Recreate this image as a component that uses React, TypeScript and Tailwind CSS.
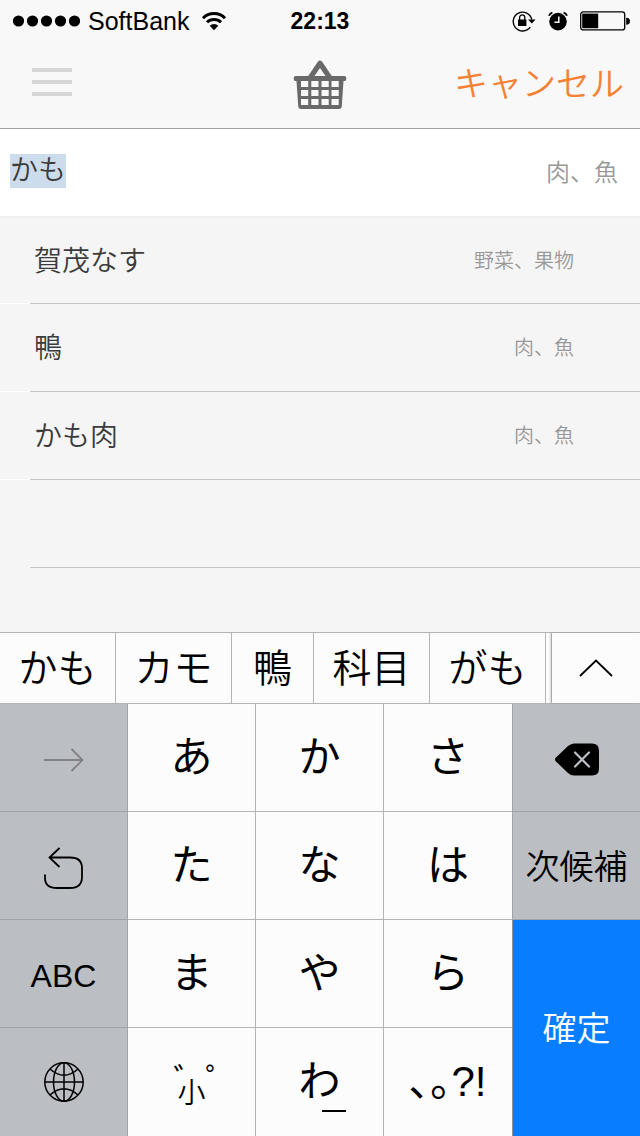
import React, { useEffect, useRef, useState } from 'react';

interface Suggestion {
    name: string;
    category: string;
}

const suggestions: Suggestion[] = [
    { name: '賀茂なす', category: '野菜、果物' },
    { name: '鴨', category: '肉、魚' },
    { name: 'かも肉', category: '肉、魚' },
];

const candidates = ['かも', 'カモ', '鴨', '科目', 'がも'];

function StatusBar() {
    return (
        <div className="relative flex h-10 items-center justify-between pl-3 pr-2.5 pt-0.5 text-black">
            <div className="flex items-center">
                <svg width="68" height="12" viewBox="0 0 68 12" aria-hidden="true">
                    {[6.5, 20.5, 34.5, 48.5, 62.5].map((cx) => (
                        <circle key={cx} cx={cx} cy="6" r="5.6" />
                    ))}
                </svg>
                <span className="ml-2 text-[25px] leading-none">SoftBank</span>
                <svg className="ml-3" width="26" height="20" viewBox="0 0 26 20" fill="none" stroke="#000" strokeWidth="3" aria-hidden="true">
                    <path d="M2 7.2A15.5 15.5 0 0 1 24 7.2" />
                    <path d="M6 11.3A10 10 0 0 1 20 11.3" />
                    <path d="M13 19.2L8.7 14.8A6.2 6.2 0 0 1 17.3 14.8Z" fill="#000" stroke="none" />
                </svg>
            </div>
            <span className="absolute inset-x-0 text-center text-[23px] font-bold leading-none">22:13</span>
            <div className="flex items-center">
                <svg width="24" height="22" viewBox="0 0 24 22" fill="none" aria-hidden="true">
                    <path d="M18.2 17.2A9.4 9.4 0 1 1 19.8 9.5" stroke="#000" strokeWidth="1.4" />
                    <path d="M16 9.6H23.6L19.8 13.6Z" fill="#000" />
                    <rect x="6" y="9.5" width="8.4" height="6.5" fill="#000" />
                    <path d="M7.6 10V7.6A2.6 2.8 0 0 1 12.8 7.6V10" stroke="#000" strokeWidth="1.3" />
                </svg>
                <svg className="ml-3" width="20" height="20" viewBox="0 0 20 20" fill="none" aria-hidden="true">
                    <circle cx="10" cy="10.6" r="8.8" fill="#000" />
                    <path d="M1 4.8A5 5 0 0 1 4.4 1.6M19 4.8A5 5 0 0 0 15.6 1.6" stroke="#000" strokeWidth="1.8" />
                    <path d="M10.8 5.4V11.2H6.4" stroke="#f8f8f8" strokeWidth="1.5" />
                </svg>
                <svg className="ml-3" width="50" height="20" viewBox="0 0 50 20" fill="none" aria-hidden="true">
                    <rect x="0.7" y="0.9" width="44" height="18" rx="2.5" stroke="#000" strokeWidth="1.3" />
                    <rect x="2.2" y="2.6" width="16" height="14.6" fill="#000" />
                    <path d="M46.5 7A3.2 3.2 0 0 1 46.5 13.4Z" fill="#000" stroke="#000" strokeWidth="0.6" />
                </svg>
            </div>
        </div>
    );
}

function BasketIcon() {
    return (
        <svg width="53" height="49" viewBox="0 0 53 49" aria-hidden="true">
            <path d="M16.5 18L26.5 3.2L36.5 18" fill="none" stroke="#696969" strokeWidth="5.2" strokeLinejoin="round" />
            <path d="M2 16H51Q53 16 53 18.5T51 21H50L48.3 46Q48 49 45.5 49H7.5Q5 49 4.7 46L3 21H2Q0 21 0 18.5T2 16Z" fill="#696969" />
            <g fill="#f8f8f8">
                {[21, 30, 39].map((y) =>
                    [7.5, 17.8, 28, 38].map((x) => <rect key={`${x}-${y}`} x={x} y={y} width="7.2" height="6" />)
                )}
            </g>
        </svg>
    );
}

function Header() {
    return (
        <header className="border-b border-[#a0a0a0] bg-[#f8f8f8]">
            <StatusBar />
            <div className="relative flex h-22 items-center justify-between pl-8 pr-4">
                <button type="button" aria-label="メニュー" className="flex flex-col gap-2 pb-1">
                    <span className="h-1 w-10 bg-[#d6d6d6]" />
                    <span className="h-1 w-10 bg-[#d6d6d6]" />
                    <span className="h-1 w-10 bg-[#d6d6d6]" />
                </button>
                <div className="absolute left-1/2 -translate-x-1/2">
                    <BasketIcon />
                </div>
                <button type="button" className="text-[34px] text-[#f58233]">
                    キャンセル
                </button>
            </div>
        </header>
    );
}

function SuggestionList() {
    return (
        <ul className="flex-1">
            {suggestions.map((item) => (
                <li key={item.name} className="h-22 border-b border-b-white pl-[30px] first:border-t-2 first:border-t-[#efefef]">
                    <div className="-mb-px flex h-[calc(100%+1px)] items-center justify-between border-b border-[#c7c7c7] pl-1 pr-[66px]">
                        <span className="pt-0.5 text-[28px] text-[#3c3c3c]">{item.name}</span>
                        <span className="text-[20px] text-[#999]">{item.category}</span>
                    </div>
                </li>
            ))}
            <li className="ml-[30px] h-22 border-b border-[#c7c7c7]" />
        </ul>
    );
}

function CandidateBar({ onPick }: { onPick: (word: string) => void }) {
    return (
        <div className="flex h-18 border-y border-[#b2b4b8] bg-[#fcfcfc]">
            <div className="flex flex-1 overflow-hidden">
                {candidates.map((word) => (
                    <button
                        key={word}
                        type="button"
                        onClick={() => onPick(word)}
                        className={`shrink-0 border-r border-[#b2b4b8] text-[39px] leading-none ${word.length > 1 ? 'w-[116px]' : 'w-[82px]'}`}
                    >
                        {word}
                    </button>
                ))}
            </div>
            <button
                type="button"
                aria-label="候補を広げる"
                className="flex w-[89px] items-center justify-center border-l border-[#a8a8a8] shadow-[-1px_0_2px_rgba(0,0,0,0.15)]"
            >
                <svg width="34" height="18" viewBox="0 0 34 18" fill="none" stroke="#000" strokeWidth="1.8" aria-hidden="true">
                    <path d="M1 17L17 1.5L33 17" />
                </svg>
            </button>
        </div>
    );
}

const whiteKey = 'flex items-center justify-center border-b border-r border-[#b2b4b8] bg-[#fcfcfc] text-[42px] font-normal leading-none';
const grayKey = 'flex items-center justify-center border-b border-r border-[#a0a3a8] bg-[#bbbec3] pt-1 text-[32px] leading-none';

function Keyboard() {
    return (
        <div className="grid auto-rows-[108px] grid-cols-5 text-black">
            <button type="button" aria-label="次へ" className={grayKey}>
                <svg width="40" height="24" viewBox="0 0 40 24" fill="none" stroke="#808285" strokeWidth="1.8" aria-hidden="true">
                    <path d="M0 12H38.5M27.5 1L38.5 12L27.5 23" />
                </svg>
            </button>
            <button type="button" className={whiteKey}>あ</button>
            <button type="button" className={whiteKey}>か</button>
            <button type="button" className={`${whiteKey} border-r-0`}>さ</button>
            <button type="button" aria-label="削除" className={`${grayKey} border-l border-r-0`}>
                <svg width="44" height="33" viewBox="0 0 44 33" aria-hidden="true">
                    <path d="M1 14.5L13 3Q16 0.5 19 0.5H37Q44 0.5 44 7.5V25.5Q44 32.5 37 32.5H19Q16 32.5 13 30L1 18.5Q-1 16.5 1 14.5Z" />
                    <path d="M20 9.5L34 23.5M34 9.5L20 23.5" stroke="#bbbec3" strokeWidth="2.2" strokeLinecap="round" />
                </svg>
            </button>

            <button type="button" aria-label="戻す" className={grayKey}>
                <svg width="40" height="42" viewBox="0 0 40 42" fill="none" stroke="#000" strokeWidth="1.8" aria-hidden="true">
                    <path d="M15.5 1L5.5 10.5L15.5 20M5.5 10.5H26Q38 10.5 38 21V30Q38 41 26 41H13Q1 41 1 31V27.5" />
                </svg>
            </button>
            <button type="button" className={whiteKey}>た</button>
            <button type="button" className={whiteKey}>な</button>
            <button type="button" className={`${whiteKey} border-r-0`}>は</button>
            <button type="button" className="flex items-center justify-center whitespace-nowrap border-b border-l border-[#a0a3a8] bg-[#bbbec3] pt-0.5 text-[34px] leading-none">
                次候補
            </button>

            <button type="button" className={grayKey}>ABC</button>
            <button type="button" className={whiteKey}>ま</button>
            <button type="button" className={whiteKey}>や</button>
            <button type="button" className={`${whiteKey} border-r-0`}>ら</button>
            <button type="button" className="row-span-2 flex items-center justify-center border-l border-[#8a9099] bg-[#087dff] pt-0.5 text-[34px] leading-none text-white">
                確定
            </button>

            <button type="button" aria-label="キーボード切替" className="flex items-center justify-center border-r border-[#a0a3a8] bg-[#bbbec3]">
                <svg width="40" height="40" viewBox="0 0 40 40" fill="none" stroke="#000" strokeWidth="1.5" aria-hidden="true">
                    <circle cx="20" cy="20" r="19.2" />
                    <ellipse cx="20" cy="20" rx="10.5" ry="19.2" />
                    <path d="M20 0.8V39.2M0.8 20H39.2M6 7Q20 19.5 34 7M6 33Q20 20.5 34 33" />
                </svg>
            </button>
            <button type="button" className={`${whiteKey} relative border-b-0`}>
                <span className="absolute inset-x-0 top-9 pl-7 text-[32px] leading-8">゛゜</span>
                <span className="pt-6 text-[28px] font-[350] leading-7">小</span>
            </button>
            <button type="button" className={`${whiteKey} relative border-b-0`}>
                わ
                <span className="absolute bottom-6 left-[66px] h-0.5 w-6 bg-black" />
            </button>
            <button type="button" className={`${whiteKey} border-b-0 border-r-0`}>､｡?!</button>
        </div>
    );
}

export default function App() {
    const [query, setQuery] = useState('かも');
    const inputRef = useRef<HTMLInputElement>(null);

    useEffect(() => {
        inputRef.current?.focus();
        inputRef.current?.select();
    }, []);

    return (
        <div lang="ja" className="flex min-h-screen flex-col bg-[#f5f5f5] font-['Liberation_Sans','Noto_Sans_CJK_JP',sans-serif] font-[350]">
            <Header />
            <div className="flex h-[87px] items-center bg-white pl-2.5 pr-[22px]">
                <input
                    ref={inputRef}
                    type="text"
                    aria-label="食材名"
                    value={query}
                    onChange={(e) => setQuery(e.target.value)}
                    className="mb-1 h-[34px] min-w-0 flex-1 text-[28px] leading-[34px] text-[#3c3c3c] caret-transparent outline-none selection:bg-[#cddcec] selection:text-[#3c3c3c]"
                />
                <span className="text-[24px] text-[#999]">肉、魚</span>
            </div>
            <SuggestionList />
            <CandidateBar onPick={setQuery} />
            <Keyboard />
        </div>
    );
}
